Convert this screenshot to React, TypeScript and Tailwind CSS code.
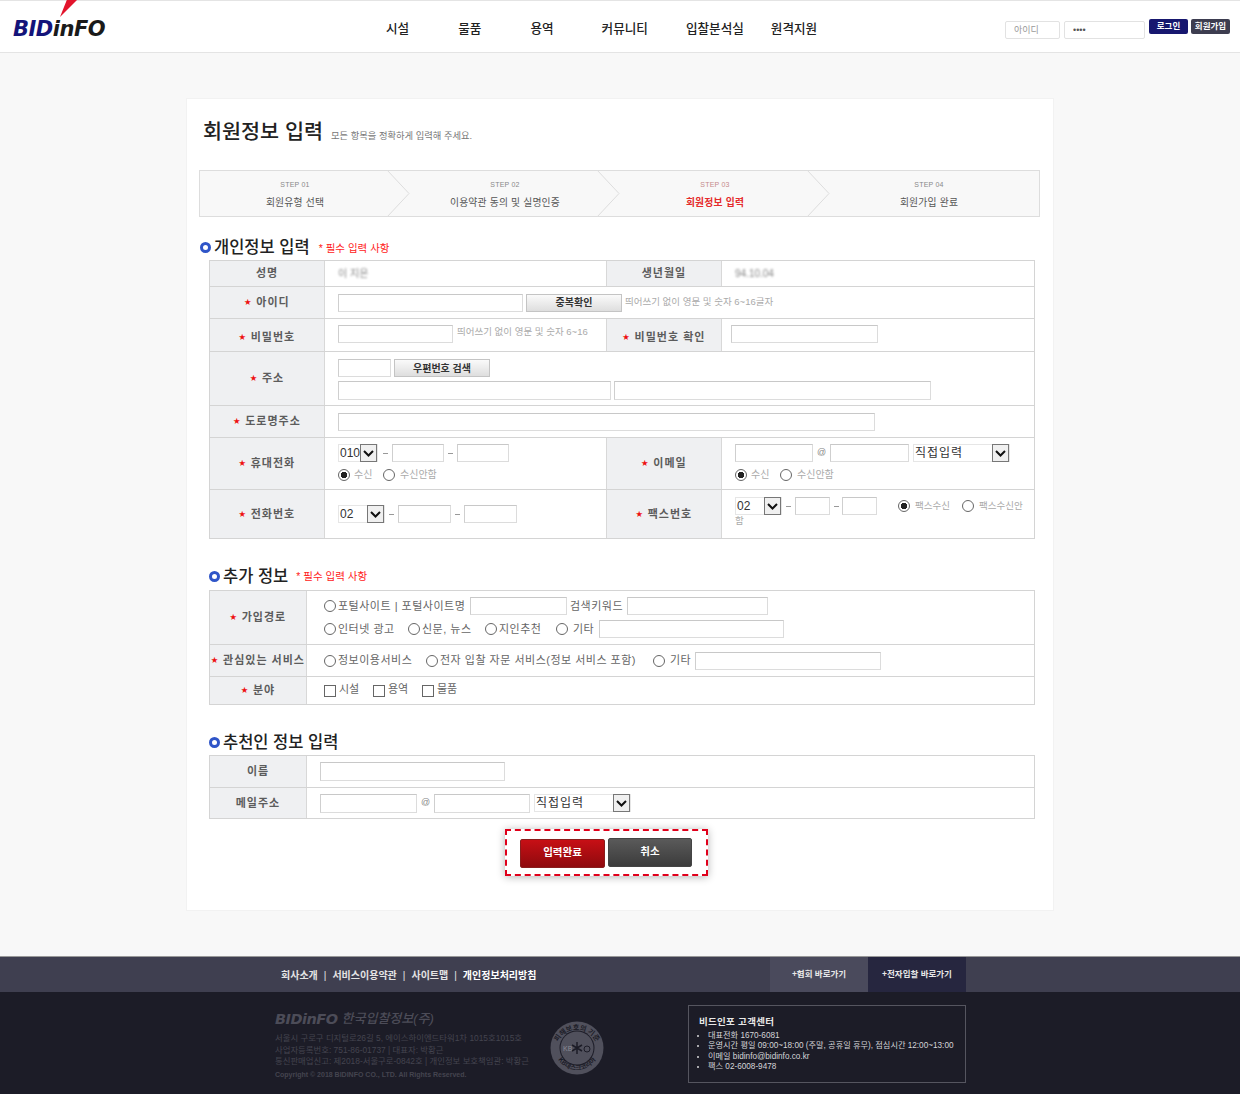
import React from "react";

const FONT = "font-['Liberation_Sans','Noto_Sans_CJK_KR',sans-serif]";

function Inp({ w, cls = "" }: { w: string; cls?: string }) {
  return <input className={`${w} h-[18px] shrink-0 bg-white border border-[#dcdcdc] border-t-[#c8c8c8] border-l-[#cfcfcf] outline-none ${cls}`} />;
}

function Sel({ w, text, big }: { w: string; text: string; big?: boolean }) {
  return (
    <div className={`${w} h-[18px] shrink-0 flex items-center justify-between bg-white border border-[#e6e6e6] pl-[1px] ${big ? "tracking-[1px]" : ""} text-[12px] text-[#333]`}>
      <span>{text}</span>
      <span className="w-[17px] h-[18px] shrink-0 flex items-center justify-center bg-[#f0f0f0] border border-[#777]">
        <svg width="11" height="7" viewBox="0 0 11 7"><path d="M1 1l4.5 4.5L10 1" fill="none" stroke="#111" strokeWidth="2" /></svg>
      </span>
    </div>
  );
}

function Radio({ on, name }: { on?: boolean; name: string }) {
  return (
    <input
      type="radio"
      name={name}
      defaultChecked={on}
      className="appearance-none size-3 m-0 shrink-0 rounded-full border border-[#666] bg-white checked:bg-[radial-gradient(circle,#222_0,#222_42%,#fff_50%)]"
    />
  );
}

function Check() {
  return <input type="checkbox" className="appearance-none size-[12px] m-0 shrink-0 border border-[#666] bg-white" />;
}

function Star() {
  return <span className="text-[#e11] text-[7px] mr-[4px]">★</span>;
}

function Label({ text, req, w = "w-[115px]", cls = "" }: { text: string; req?: boolean; w?: string; cls?: string }) {
  return (
    <div className={`${w} ${cls} shrink-0 h-full flex items-center justify-center bg-[#eff0f2] border-r border-[#d8d8d8] text-[11px] font-bold text-[#5c5c5c] tracking-[1px] whitespace-nowrap`}>
      {req && <Star />}
      {text}
    </div>
  );
}

function Row({ h, children }: { h: string; children: React.ReactNode }) {
  return <div className={`${h} flex border-b border-[#d4d4d4]`}>{children}</div>;
}

function Dash({ cls }: { cls: string }) {
  return <span className={`${cls} shrink-0 w-[5px] h-px bg-[#999]`} />;
}

function Hint({ children, cls = "" }: { children: React.ReactNode; cls?: string }) {
  return <span className={`text-[9.5px] text-[#aaa] whitespace-nowrap ${cls}`}>{children}</span>;
}

function Heading({ h, pb, text, req, cls = "" }: { h: string; pb: string; text: string; req?: string; cls?: string }) {
  return (
    <div className={`${h} ${pb} ${cls} flex items-end`}>
      <div className="flex items-center h-5">
        <span className="size-[11px] rounded-full border-[3px] border-[#2f55c8] bg-white mr-[3px]" />
        <span className="text-[16.5px] font-medium text-[#222] leading-5 whitespace-nowrap">{text}</span>
        {req && <span className={`${req} text-[10.5px] text-[#f22] whitespace-nowrap`}>* 필수 입력 사항</span>}
      </div>
    </div>
  );
}

function Opt({ w, name, text, on, gap = "ml-[2px]", tone = "text-[11px] text-[#666] tracking-[0.5px]" }: { w: string; name: string; text: string; on?: boolean; gap?: string; tone?: string }) {
  return (
    <label className={`${w} shrink-0 flex items-center`}>
      <Radio name={name} on={on} />
      <span className={`${gap} ${tone} whitespace-nowrap`}>{text}</span>
    </label>
  );
}

function Box({ w, text }: { w: string; text: string }) {
  return (
    <label className={`${w} shrink-0 flex items-center`}>
      <Check />
      <span className="ml-[3px] -mt-[2px] text-[11px] text-[#666] whitespace-nowrap">{text}</span>
    </label>
  );
}

function Btn({ w, text }: { w: string; text: string }) {
  return (
    <button className={`${w} h-[18px] shrink-0 border border-[#c4c4c4] bg-gradient-to-b from-[#fafafa] to-[#dedede] text-[10px] font-bold text-[#333]`}>
      {text}
    </button>
  );
}

function Logo({ cls, sub }: { cls: string; sub: string }) {
  return <span className={`${cls} italic font-bold whitespace-nowrap font-['DejaVu_Sans',sans-serif] tracking-[-0.5px]`}><span className={sub}>BID</span>inFO</span>;
}

function Steps() {
  const items = [
    { n: "STEP 01", t: "회원유형 선택", w: "w-[210px]", p: "pr-[20px]", c: true },
    { n: "STEP 02", t: "이용약관 동의 및 실명인증", w: "w-[210px]", p: "pr-[20px]", c: true },
    { n: "STEP 03", t: "회원정보 입력", w: "w-[210px]", p: "pr-[20px]", c: true, on: true },
    { n: "STEP 04", t: "회원가입 완료", w: "flex-1", p: "pr-[11px]" },
  ];
  return (
    <div className="-ml-[10px] w-[841px] h-[47px] flex bg-[#f8f8f8] border border-[#dddddd]">
      {items.map((s) => (
        <div key={s.n} className={`${s.w} ${s.p} relative flex flex-col items-center`}>
          <span className={`mt-[9px] text-[7px] tracking-[0.2px] leading-[10px] ${s.on ? "text-[#c58a8a]" : "text-[#888]"}`}>{s.n}</span>
          <span className={`mt-[6px] text-[9.8px] tracking-[0.2px] leading-[14px] whitespace-nowrap ${s.on ? "text-[#e52b2b] font-bold" : "text-[#555]"}`}>{s.t}</span>
          {s.c && (
            <svg className="absolute right-0 -top-px" width="24" height="47" viewBox="0 0 24 47">
              <path d="M1 0l22 23.5L1 47" fill="#f8f8f8" stroke="#dddddd" strokeWidth="1" />
            </svg>
          )}
        </div>
      ))}
    </div>
  );
}

function Stamp() {
  return (
    <svg width="54" height="54" viewBox="0 0 54 54" className="shrink-0">
      <circle cx="27" cy="27" r="26.5" fill="#50505c" />
      <circle cx="27" cy="27" r="17.5" fill="#1c1c27" />
      <circle cx="27" cy="27" r="16.5" fill="#50505c" />
      <defs>
        <path id="st-top" d="M6 30a21 21 0 0 1 42 0" />
        <path id="st-bot" d="M5 27a22 22 0 0 0 44 0" />
      </defs>
      <text fontSize="7" fontWeight="700" fill="#1c1c27" fontFamily="Noto Sans CJK KR, sans-serif">
        <textPath href="#st-top" startOffset="50%" textAnchor="middle">피해보호의 기준</textPath>
      </text>
      <text fontSize="6.5" fontWeight="700" fill="#1c1c27" fontFamily="Noto Sans CJK KR, sans-serif">
        <textPath href="#st-bot" startOffset="50%" textAnchor="middle">KB데스크코리아</textPath>
      </text>
      <text x="13" y="30" fontSize="7" fill="#8a8a94" fontFamily="Liberation Sans, sans-serif">KB</text>
      <path d="M27 21v12M22 24l10 6M32 24l-10 6" stroke="#1c1c27" strokeWidth="1.5" />
      <circle cx="37" cy="28" r="3" fill="none" stroke="#1c1c27" strokeWidth="1" />
    </svg>
  );
}

const SMALL = "text-[10px] text-[#aaa]";
const TINY = "text-[9.5px] text-[#aaa]";

export default function App() {
  return (
    <div className={`${FONT} w-[1240px] h-[1094px] bg-[#f8f8f8] flex flex-col overflow-hidden`}>
      {/* Header */}
      <header className="h-[53px] shrink-0 bg-white border-t border-b border-[#e4e4e4] flex items-center pl-[13px] pr-[10px]">
        <div className="relative w-[95px] h-[24px] mt-[4px] shrink-0">
          <svg className="absolute left-[44px] -top-[20px]" width="26" height="21" viewBox="0 0 26 21">
            <path d="M11 0L23 0L3 20Z" fill="#e2142c" />
          </svg>
          <Logo cls="text-[21px] leading-6 text-[#1a1a1a]" sub="text-[#14147a]" />
        </div>
        <nav className="flex items-center mt-[6px] text-[12.6px] font-medium text-[#222] whitespace-nowrap">
          <a className="ml-[278px]">시설</a>
          <a className="ml-[49px]">물품</a>
          <a className="ml-[49px]">용역</a>
          <a className="ml-[48px]">커뮤니티</a>
          <a className="ml-[38px]">입찰분석실</a>
          <a className="ml-[27px]">원격지원</a>
        </nav>
        <div className="ml-auto mt-[6px] flex items-start">
          <input placeholder="아이디" className="w-[55px] h-[18px] mt-[1px] pl-[8px] rounded-[2px] border border-[#e2e2e2] text-[9px] placeholder:text-[#999] outline-none" />
          <input type="password" defaultValue="1234" className="ml-[4px] w-[81px] h-[18px] mt-[1px] pl-[8px] rounded-[2px] border border-[#e2e2e2] text-[9px] text-[#555] outline-none" />
          <button className="ml-[4px] w-[39px] h-[15px] -mt-[1px] rounded-[2px] bg-[#17176f] text-[8.5px] font-bold text-white">로그인</button>
          <button className="ml-[3px] w-[39px] h-[15px] -mt-[1px] rounded-[2px] bg-[#3d3d50] text-[8.5px] font-bold text-white">회원가입</button>
        </div>
      </header>

      {/* Main */}
      <main className="flex-1 pt-[45px]">
        <div className="w-[868px] h-[813px] mx-auto bg-white border border-[#f2f2f2] pl-[22px] relative">
          <div className="h-[71px] flex items-end pb-[24px] -ml-[6px]">
            <h1 className="text-[20.7px] font-medium text-[#222] leading-7 whitespace-nowrap">회원정보 입력</h1>
            <span className="ml-[8px] mb-[2px] text-[9.3px] text-[#777] whitespace-nowrap">모든 항목을 정확하게 입력해 주세요.</span>
          </div>
          <Steps />

          <Heading h="h-[43px]" pb="pb-[3px]" cls="-ml-[9px]" text="개인정보 입력" req="ml-[9px] mt-[3px]" />
          <div className="w-[826px] border-t border-x border-[#d4d4d4]">
            <Row h="h-[26px]">
              <Label text="성명" />
              <div className="w-[282px] shrink-0 h-full flex items-center pl-[13px] border-r border-[#d8d8d8]">
                <span className="blur-[1px] text-[10px] text-[#888]">이 지은</span>
              </div>
              <Label text="생년월일" />
              <div className="flex-1 min-w-0 flex items-center pl-[13px]">
                <span className="blur-[1px] text-[10px] text-[#888]">94.10.04</span>
              </div>
            </Row>
            <Row h="h-[32px]">
              <Label text="아이디" req />
              <div className="flex-1 min-w-0 flex items-center pl-[13px]">
                <Inp w="w-[185px]" />
                <Btn w="ml-[3px] w-[96px]" text="중복확인" />
                <Hint cls="ml-[3px]">띄어쓰기 없이 영문 및 숫자 6~16글자</Hint>
              </div>
            </Row>
            <Row h="h-[33px]">
              <Label text="비밀번호" req cls="pt-[4px]" />
              <div className="w-[282px] shrink-0 h-full flex items-center pl-[13px] pb-[2px] border-r border-[#d8d8d8]">
                <Inp w="w-[115px]" />
                <Hint cls="ml-[4px] -mt-[4px]">띄어쓰기 없이 영문 및 숫자 6~16</Hint>
              </div>
              <Label text="비밀번호 확인" req cls="pt-[4px]" />
              <div className="flex-1 min-w-0 flex items-center pl-[9px] pb-[2px]">
                <Inp w="w-[147px]" />
              </div>
            </Row>
            <Row h="h-[54px]">
              <Label text="주소" req />
              <div className="flex-1 min-w-0 flex flex-col pl-[13px] pt-[7px] gap-[4px]">
                <div className="flex">
                  <Inp w="w-[53px]" />
                  <Btn w="ml-[3px] w-[96px]" text="우편번호 검색" />
                </div>
                <div className="flex">
                  <Inp w="w-[273px]" cls="h-[19px]" />
                  <Inp w="ml-[3px] w-[317px]" cls="h-[19px]" />
                </div>
              </div>
            </Row>
            <Row h="h-[32px]">
              <Label text="도로명주소" req />
              <div className="flex-1 min-w-0 flex items-center pl-[13px]">
                <Inp w="w-[537px]" />
              </div>
            </Row>
            <Row h="h-[52px]">
              <Label text="휴대전화" req />
              <div className="w-[282px] shrink-0 h-full flex flex-col pl-[13px] pt-[6px] border-r border-[#d8d8d8]">
                <div className="flex items-center">
                  <Sel w="w-[40px]" text="010" />
                  <Dash cls="ml-[5px]" />
                  <Inp w="ml-[4px] w-[52px]" />
                  <Dash cls="ml-[4px]" />
                  <Inp w="ml-[4px] w-[52px]" />
                </div>
                <div className="flex items-center mt-[5px]">
                  <Opt w="w-[45px]" name="m" text="수신" on gap="ml-[4px]" tone={SMALL} />
                  <Opt w="w-[70px]" name="m" text="수신안함" gap="ml-[5px]" tone={SMALL} />
                </div>
              </div>
              <Label text="이메일" req />
              <div className="flex-1 min-w-0 flex flex-col pl-[13px] pt-[6px]">
                <div className="flex items-center">
                  <Inp w="w-[78px]" />
                  <span className="ml-[4px] w-[13px] text-[9px] text-[#888]">@</span>
                  <Inp w="w-[79px]" />
                  <Sel w="ml-[4px] w-[97px]" text="직접입력" big />
                </div>
                <div className="flex items-center mt-[5px]">
                  <Opt w="w-[45px]" name="e" text="수신" on gap="ml-[4px]" tone={SMALL} />
                  <Opt w="w-[70px]" name="e" text="수신안함" gap="ml-[5px]" tone={SMALL} />
                </div>
              </div>
            </Row>
            <Row h="h-[49px]">
              <Label text="전화번호" req />
              <div className="w-[282px] shrink-0 h-full flex items-center pl-[13px] border-r border-[#d8d8d8]">
                <Sel w="w-[47px]" text="02" />
                <Dash cls="ml-[4px]" />
                <Inp w="ml-[4px] w-[53px]" />
                <Dash cls="ml-[4px]" />
                <Inp w="ml-[4px] w-[53px]" />
              </div>
              <Label text="팩스번호" req />
              <div className="flex-1 min-w-0 flex flex-col pl-[13px] pt-[7px]">
                <div className="flex items-center">
                  <Sel w="w-[47px]" text="02" />
                  <Dash cls="ml-[4px]" />
                  <Inp w="ml-[4px] w-[35px]" />
                  <Dash cls="ml-[4px]" />
                  <Inp w="ml-[3px] w-[35px]" />
                  <div className="ml-[21px] flex items-center">
                    <Opt w="w-[64px]" name="f" text="팩스수신" on gap="ml-[5px]" tone={TINY} />
                    <Opt w="w-[70px]" name="f" text="팩스수신안" gap="ml-[5px]" tone={TINY} />
                  </div>
                </div>
                <Hint cls="mt-[-1px]">함</Hint>
              </div>
            </Row>
          </div>

          <Heading h="h-[51px]" pb="pb-[4px]" text="추가 정보" req="ml-[8px] mt-[2px]" />
          <div className="w-[826px] border-t border-x border-[#d4d4d4]">
            <Row h="h-[54px]">
              <Label text="가입경로" req w="w-[97px]" />
              <div className="flex-1 min-w-0 flex flex-col pl-[17px] pt-[6px] gap-[5px]">
                <div className="flex items-center">
                  <Opt w="w-[146px]" name="j" text="포털사이트 | 포털사이트명" />
                  <Inp w="w-[97px]" />
                  <span className="ml-[3px] w-[57px] text-[11px] text-[#666] tracking-[0.5px] whitespace-nowrap">검색키워드</span>
                  <Inp w="w-[141px]" />
                </div>
                <div className="flex items-center">
                  <Opt w="w-[84px]" name="j" text="인터넷 광고" />
                  <Opt w="w-[77px]" name="j" text="신문, 뉴스" />
                  <Opt w="w-[71px]" name="j" text="지인추천" />
                  <Opt w="w-[43px]" name="j" text="기타" gap="ml-[5px]" />
                  <Inp w="w-[185px]" />
                </div>
              </div>
            </Row>
            <Row h="h-[32px]">
              <Label text="관심있는 서비스" req w="w-[97px]" />
              <div className="flex-1 min-w-0 flex items-center pl-[17px]">
                <Opt w="w-[102px]" name="s" text="정보이용서비스" />
                <Opt w="w-[227px]" name="s" text="전자 입찰 자문 서비스(정보 서비스 포함)" />
                <Opt w="w-[42px]" name="s" text="기타" gap="ml-[5px]" />
                <Inp w="w-[186px]" />
              </div>
            </Row>
            <Row h="h-[28px]">
              <Label text="분야" req w="w-[97px]" />
              <div className="flex-1 min-w-0 flex items-center pl-[17px]">
                <Box w="w-[49px]" text="시설" />
                <Box w="w-[49px]" text="용역" />
                <Box w="w-[49px]" text="물품" />
              </div>
            </Row>
          </div>

          <Heading h="h-[50px]" pb="pb-[3px]" text="추천인 정보 입력" />
          <div className="w-[826px] border-t border-x border-[#d4d4d4]">
            <Row h="h-[32px]">
              <Label text="이름" w="w-[97px]" />
              <div className="flex-1 min-w-0 flex items-center pl-[13px]">
                <Inp w="w-[185px]" cls="h-[19px]" />
              </div>
            </Row>
            <Row h="h-[31px]">
              <Label text="메일주소" w="w-[97px]" />
              <div className="flex-1 min-w-0 flex items-center pl-[13px]">
                <Inp w="w-[97px]" cls="h-[19px]" />
                <span className="ml-[4px] w-[13px] text-[9px] text-[#888]">@</span>
                <Inp w="w-[96px]" cls="h-[19px]" />
                <Sel w="ml-[4px] w-[97px]" text="직접입력" big />
              </div>
            </Row>
          </div>

          <div className="mt-[10px] ml-[296px] w-[203px] h-[47px] flex items-center pl-[13px] border-2 border-dashed border-[#e0001b] shadow-[0_1px_8px_rgba(0,0,0,0.3)]">
            <button className="w-[85px] h-[29px] mt-[1px] rounded-[2px] bg-gradient-to-b from-[#c70f15] to-[#8f0a0e] border border-[#8a1d1d] text-[10.5px] font-bold text-white">입력완료</button>
            <button className="ml-[3px] w-[84px] h-[29px] -mt-[1px] rounded-[2px] bg-gradient-to-b from-[#5a5a5a] to-[#3c3c3c] border border-[#444] text-[10.5px] font-bold text-white">취소</button>
          </div>
        </div>
      </main>

      {/* Footer */}
      <footer className="shrink-0 h-[138px] border-t border-[#999] mt-[45px] flex flex-col">
        <div className="h-[35px] bg-[#3f3f50] flex items-stretch pl-[281px]">
          <div className="flex items-center pt-[2px] text-[10px] font-bold text-[#e4e4e4] whitespace-nowrap">
            <a>회사소개</a>
            <span className="mx-[6px] font-normal">|</span>
            <a>서비스이용약관</a>
            <span className="mx-[6px] font-normal">|</span>
            <a>사이트맵</a>
            <span className="mx-[6px] font-normal">|</span>
            <a className="text-white">개인정보처리방침</a>
          </div>
          <a className="ml-auto w-[98px] flex items-center justify-center bg-[#4a4a5c] text-[8.5px] font-bold text-[#e8e8e8]">+협회 바로가기</a>
          <a className="w-[98px] mr-[274px] flex items-center justify-center bg-[#26263f] text-[8.5px] font-bold text-[#e8e8e8]">+전자입찰 바로가기</a>
        </div>
        <div className="flex-1 bg-[#1c1c27] flex pl-[275px]">
          <div className="w-[275px] shrink-0 pt-[17px]">
            <div className="flex items-center h-[20px] text-[#4c4c58]">
              <Logo cls="text-[14.5px] leading-5" sub="" />
              <span className="ml-[4px] italic font-medium text-[13px] whitespace-nowrap">한국입찰정보(주)</span>
            </div>
            <div className="mt-[4px] text-[8.4px] leading-[11.5px] text-[#44444f] whitespace-nowrap">
              <p>서울시 구로구 디지털로26길 5, 에이스하이엔드타워1차 1015호1015호</p>
              <p>사업자등록번호: 751-86-01737 | 대표자: 박황근</p>
              <p>통신판매업신고: 제2018-서울구로-0842호 | 개인정보 보호책임관: 박황근</p>
              <p className="mt-[1px] text-[7px] font-bold">Copyright © 2018 BIDINFO CO., LTD. All Rights Reserved.</p>
            </div>
          </div>
          <div className="pt-[29px]"><Stamp /></div>
          <div className="ml-[84px] mt-[13px] w-[278px] h-[78px] border border-[#55555f] pl-[10px] pt-[10px] text-[#d4d4d8]">
            <p className="text-[9.5px] font-bold text-[#e8e8e8] leading-[12px] tracking-[0.3px]">비드인포 고객센터</p>
            <ul className="mt-[3px] text-[8.2px] leading-[10.3px] whitespace-nowrap list-disc pl-[9px]">
              <li>대표전화 1670-6081</li>
              <li>운영시간 평일 09:00~18:00 (주말, 공휴일 휴무), 점심시간 12:00~13:00</li>
              <li>이메일 bidinfo@bidinfo.co.kr</li>
              <li>팩스 02-6008-9478</li>
            </ul>
          </div>
        </div>
      </footer>
    </div>
  );
}
